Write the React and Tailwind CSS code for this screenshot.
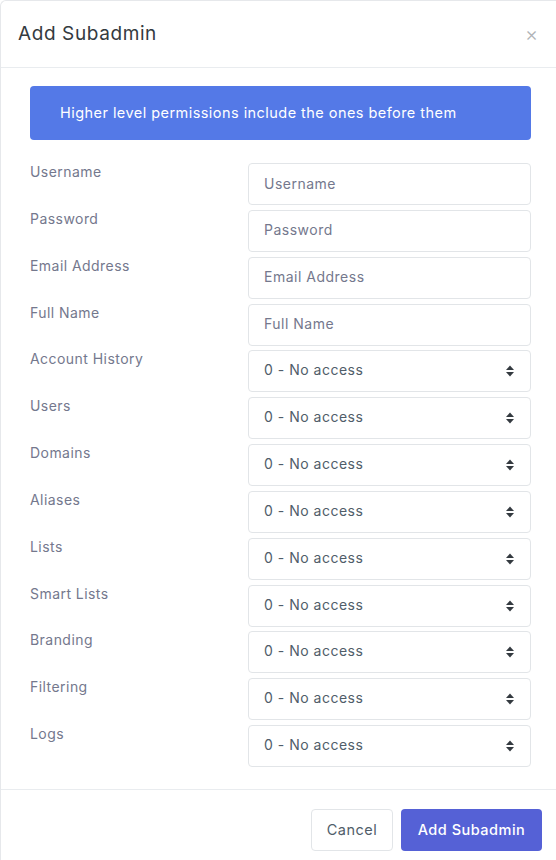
import React from "react";

const fields = [
  { label: "Username", type: "text" },
  { label: "Password", type: "text" },
  { label: "Email Address", type: "text" },
  { label: "Full Name", type: "text" },
  { label: "Account History", type: "select" },
  { label: "Users", type: "select" },
  { label: "Domains", type: "select" },
  { label: "Aliases", type: "select" },
  { label: "Lists", type: "select" },
  { label: "Smart Lists", type: "select" },
  { label: "Branding", type: "select" },
  { label: "Filtering", type: "select" },
  { label: "Logs", type: "select" },
];

function Arrows() {
  return (
    <svg width="10" height="14" viewBox="0 0 10 14" className="shrink-0">
      <path d="M5 1.5 L9 6 H1 Z" fill="#343a40" />
      <path d="M5 12.5 L9 8 H1 Z" fill="#343a40" />
    </svg>
  );
}

export default function App() {
  return (
    <div
      className="w-[556px] h-[860px] bg-white overflow-hidden rounded-tl-[6px] border-t border-l border-[#e6e8eb]"
      style={{ fontFamily: "Inter, 'Noto Sans', sans-serif" }}
    >
      <div className="h-[67px] flex items-center justify-between pl-[17px] pr-[18px] border-b border-[#e9ecef]">
        <h5 className="text-[19px] font-normal text-[#343a40] tracking-[0.6px]">Add Subadmin</h5>
        <span className="text-[#b0b3b7] text-[20px] leading-none font-light">×</span>
      </div>
      <div className="pl-[29px] pr-[25px] pt-[18px]">
        <div className="h-[54px] rounded-[4px] bg-[#5479e7] flex items-center pl-[30px] text-white text-[14.5px] tracking-[0.45px]">
          Higher level permissions include the ones before them
        </div>
        <div className="mt-[23px] flex flex-col gap-[4.85px]">
          {fields.map((f) => (
            <div key={f.label} className="flex">
              <div className="w-[218px] shrink-0 -mt-[1px] text-[14px] tracking-[0.45px] text-[#74788d] leading-[20px]">
                {f.label}
              </div>
              <div className="flex-1 h-[42px] border border-[#e2e5e8] rounded-[4px] flex items-center pl-[15px] pr-[15px] text-[14px] tracking-[0.5px]">
                {f.type === "text" ? (
                  <span className="text-[#74788d] -mt-[2px]">{f.label}</span>
                ) : (
                  <>
                    <span className="flex-1 text-[#505d69] -mt-[3px]">0 - No access</span>
                    <Arrows />
                  </>
                )}
              </div>
            </div>
          ))}
        </div>
      </div>
      <div className="mt-[22px] border-t border-[#e9ecef] pt-[19px] pr-[14px] flex justify-end gap-[8px]">
        <button className="h-[42px] w-[82px] rounded-[4px] border border-[#e2e5e8] bg-white text-[#505d69] text-[14.5px] tracking-[0.5px]">
          Cancel
        </button>
        <button className="h-[42px] w-[141px] rounded-[4px] bg-[#5561d6] text-white text-[14.5px] font-medium tracking-[0.5px]">
          Add Subadmin
        </button>
      </div>
    </div>
  );
}
